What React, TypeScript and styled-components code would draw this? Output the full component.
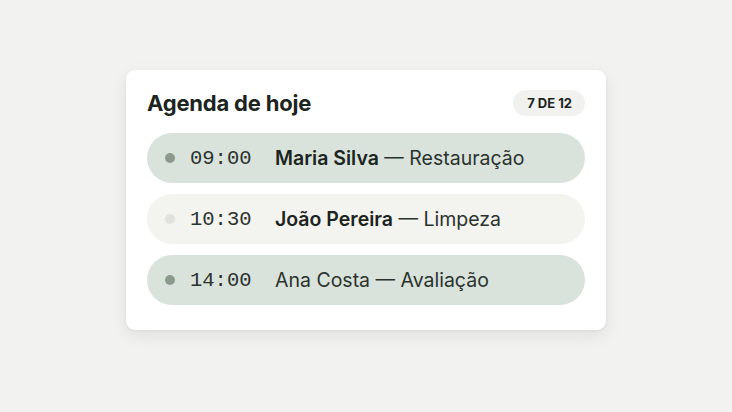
import styled, { createGlobalStyle } from "styled-components";

const GlobalStyle = createGlobalStyle`
  html, body {
    margin: 0;
    padding: 0;
    background: #f2f2f1;
  }
  body {
    font-family: Inter, "Noto Sans", sans-serif;
  }
`;

const Page = styled.main`
  width: 732px;
  height: 412px;
  box-sizing: border-box;
  padding-bottom: 12px;
  display: flex;
  align-items: center;
  justify-content: center;
`;

const Card = styled.section`
  width: 480px;
  box-sizing: border-box;
  padding: 20px 21px 25px;
  background: #ffffff;
  border-radius: 9px;
  box-shadow: 0 6px 18px rgba(30, 40, 30, 0.08), 0 1px 3px rgba(30, 40, 30, 0.06);
  display: flex;
  flex-direction: column;
`;

const Header = styled.header`
  display: flex;
  align-items: center;
  justify-content: space-between;
  height: 26px;
  margin-bottom: 17px;
`;

const Title = styled.h2`
  margin: 0;
  font-size: 22px;
  font-weight: 700;
  color: #1c2420;
  letter-spacing: -0.2px;
`;

const Badge = styled.span`
  display: inline-flex;
  align-items: center;
  height: 26px;
  padding: 0 13px 0 14px;
  border-radius: 13px;
  background: #f1f2f0;
  font-size: 13px;
  font-weight: 700;
  color: #1c2420;
`;

const List = styled.ul`
  list-style: none;
  margin: 0;
  padding: 0;
  display: flex;
  flex-direction: column;
  gap: 11px;
`;

const Row = styled.li<{ $active: boolean }>`
  height: 50px;
  box-sizing: border-box;
  padding: 0 18px;
  border-radius: 25px;
  display: flex;
  align-items: center;
  background: ${(p) => (p.$active ? "#d9e3dc" : "#f3f3ef")};
`;

const Dot = styled.span<{ $active: boolean }>`
  width: 10px;
  height: 10px;
  border-radius: 50%;
  flex: none;
  background: ${(p) => (p.$active ? "#8b9a8d" : "#e1e2dd")};
`;

const Time = styled.span`
  margin-left: 15px;
  width: 85px;
  font-family: "Liberation Mono", "DejaVu Sans Mono", monospace;
  font-size: 20.5px;
  color: #2a322d;
`;

const Label = styled.span`
  font-size: 19.5px;
  color: #2a322d;

  strong {
    font-weight: 600;
    color: #1c2420;
  }
`;

type Item = { time: string; name: string; task: string; active: boolean; bold: boolean };

const items: Item[] = [
  { time: "09:00", name: "Maria Silva", task: "Restauração", active: true, bold: true },
  { time: "10:30", name: "João Pereira", task: "Limpeza", active: false, bold: true },
  { time: "14:00", name: "Ana Costa", task: "Avaliação", active: true, bold: false },
];

export default function App() {
  return (
    <>
      <GlobalStyle />
      <Page>
        <Card>
          <Header>
            <Title>Agenda de hoje</Title>
            <Badge>7 DE 12</Badge>
          </Header>
          <List>
            {items.map((it) => (
              <Row key={it.time} $active={it.active}>
                <Dot $active={it.active} />
                <Time>{it.time}</Time>
                <Label>
                  {it.bold ? <strong>{it.name}</strong> : it.name} — {it.task}
                </Label>
              </Row>
            ))}
          </List>
        </Card>
      </Page>
    </>
  );
}
